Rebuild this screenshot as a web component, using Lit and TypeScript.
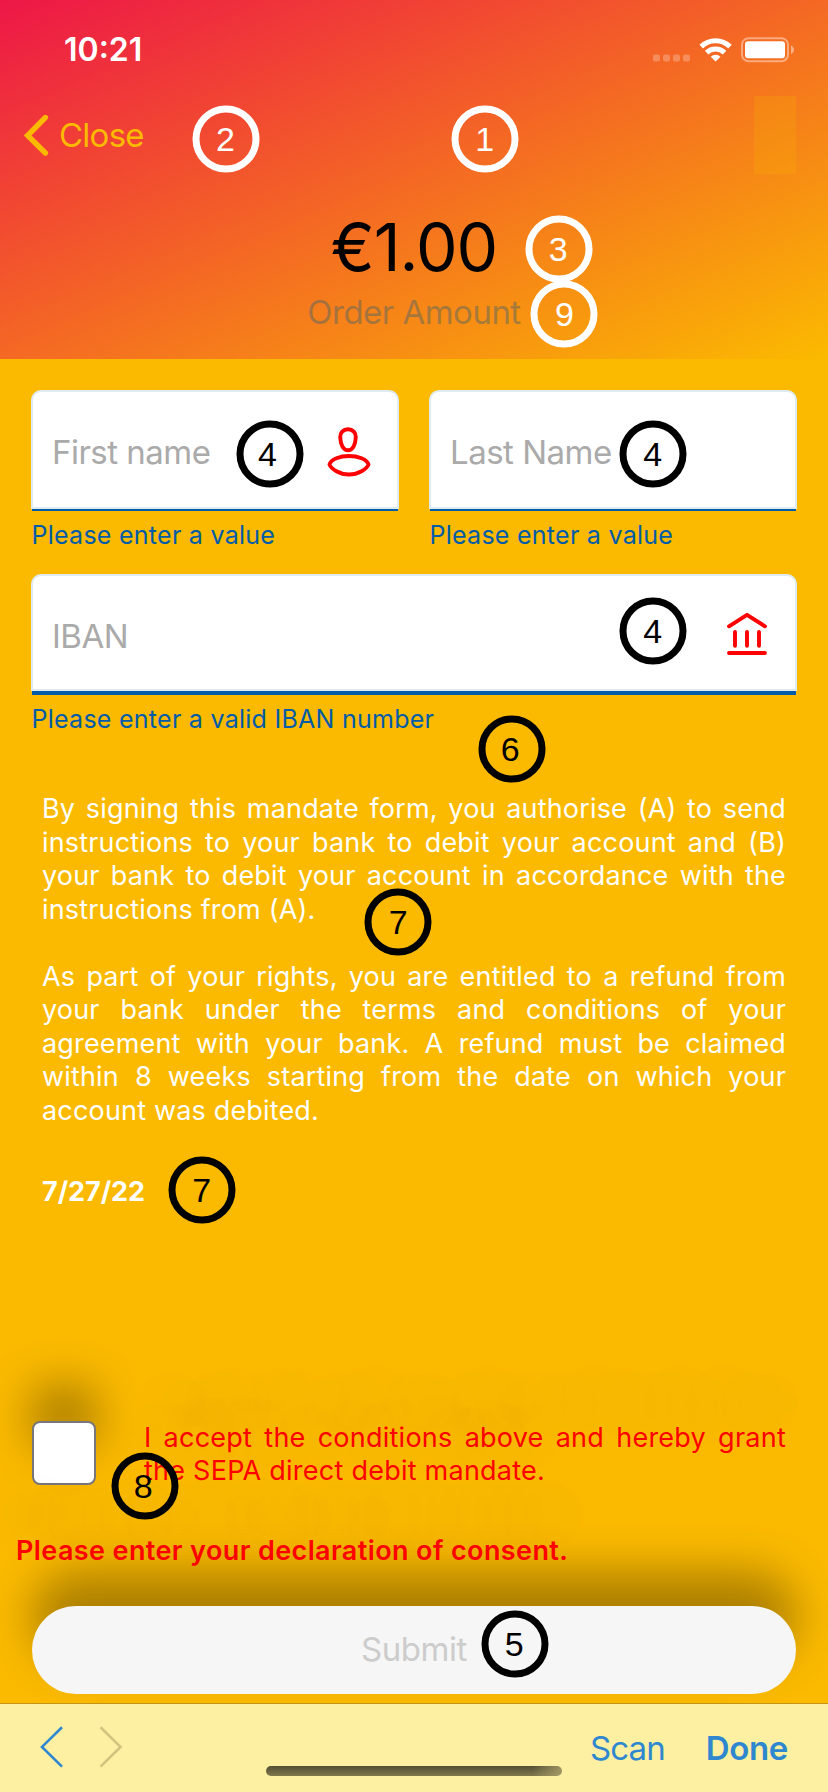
import { LitElement, html, css, svg, nothing, TemplateResult } from "lit";
import { customElement, property } from "lit/decorators.js";
import { classMap } from "lit/directives/class-map.js";

interface Marker {
  label: string;
  x: number;
  y: number;
  shift?: number;
  light?: boolean;
}

const MARKERS: Marker[] = [
  { label: "2", x: 225.5, y: 139.3, light: true },
  { label: "1", x: 484.7, y: 139.3, light: true },
  { label: "3", x: 559.3, y: 249.3, shift: -1, light: true },
  { label: "9", x: 563.5, y: 313.7, shift: 1, light: true },
  { label: "4", x: 269.5, y: 454.3, shift: -2 },
  { label: "4", x: 652.7, y: 454.3 },
  { label: "4", x: 652.7, y: 631 },
  { label: "6", x: 512.3, y: 749, shift: -2 },
  { label: "7", x: 398.3, y: 922.3 },
  { label: "7", x: 201.7, y: 1189.7 },
  { label: "8", x: 145.3, y: 1486, shift: -2 },
  { label: "5", x: 515.3, y: 1644, shift: -1 },
];

const personIcon = svg`
  <path d="M21 2.3C26 2.3 29 5.6 28.8 10.2C28.5 17 26 23.3 21 23.3C16 23.3 13.5 17 13.2 10.2C13 5.6 16 2.3 21 2.3Z"/>
  <path d="M2.5 37.5C4 32.3 13 29 22 29C31 29 40 32.3 41.5 37.5C40 42 31 47.5 22 47.5C13 47.5 4 42 2.5 37.5Z"/>`;

const bankIcon = svg`
  <path d="M4 15.3L22 3.8L40 15.3M10 21V34.7M22 21V34.7M34 21V34.7M4 42H40"/>`;

@customElement("form-field")
class FormField extends LitElement {
  @property() placeholder = "";
  @property() hint = "";
  @property({ type: Boolean }) focused = false;
  @property({ attribute: false }) icon?: TemplateResult;

  static styles = css`
    :host { display: block; }
    .box {
      box-sizing: border-box;
      display: flex;
      align-items: center;
      justify-content: space-between;
      height: 119px;
      padding: 4px 26px 0 19px;
      border: 2px solid #deebf1;
      border-radius: 10px 10px 0 0;
      background: #fff;
    }
    .box.focused { height: 117px; padding-top: 6px; }
    .placeholder {
      font-size: 33px;
      line-height: 40px;
      letter-spacing: -0.51px;
      color: #aaa;
    }
    .line { height: 2px; margin: 0 1px; background: #005ca9; }
    .line.focused { height: 4px; }
    .hint {
      margin: 9px 0 0 0.5px;
      font-size: 25px;
      line-height: 30px;
      letter-spacing: 0.26px;
      color: #005ca9;
      white-space: nowrap;
    }
    svg {
      display: block;
      margin-top: 2px;
      fill: none;
      stroke: #f00;
      stroke-width: 3.9;
      stroke-linecap: round;
      stroke-linejoin: round;
    }
  `;

  render() {
    const state = { focused: this.focused };
    return html`
      <div class=${classMap({ box: true, ...state })}>
        <span class="placeholder">${this.placeholder}</span>
        ${this.icon ? html`<svg width="44" height="52" viewBox="0 0 44 52">${this.icon}</svg>` : nothing}
      </div>
      <div class=${classMap({ line: true, ...state })}></div>
      <div class="hint">${this.hint}</div>
    `;
  }
}

@customElement("app-root")
class AppRoot extends LitElement {
  static styles = css`
    :host {
      display: block;
      position: relative;
      width: 828px;
      height: 1792px;
      overflow: hidden;
      background: #fbba00;
      font-family: Inter, "Open Sans", sans-serif;
    }
    p { margin: 0; }
    svg { display: block; }
    .header {
      height: 359px;
      background: linear-gradient(to bottom right, #ed1747, #fbba00);
    }
    .status {
      box-sizing: border-box;
      display: flex;
      align-items: center;
      height: 96px;
      padding: 3px 34px 0 64px;
      color: #fff;
    }
    .time { flex: 1; font-size: 32px; font-weight: 600; line-height: 40px; }
    .nav {
      display: flex;
      align-items: center;
      height: 78px;
      padding: 0 32px 0 22px;
    }
    .close {
      flex: 1;
      padding-left: 9px;
      font-size: 33px;
      line-height: 40px;
      letter-spacing: -0.75px;
      color: #fbba00;
    }
    .slot { width: 42px; height: 78px; background: rgba(251, 186, 0, 0.2); }
    .order {
      display: flex;
      flex-direction: column;
      align-items: center;
      padding-top: 41px;
    }
    .amount {
      font-size: 66px;
      font-weight: 400;
      line-height: 64px;
      letter-spacing: -1.03px;
      color: #000;
    }
    .caption {
      margin-top: 13px;
      font-size: 33px;
      line-height: 40px;
      letter-spacing: -0.52px;
      color: rgba(85, 102, 97, 0.5);
    }
    .fields {
      display: grid;
      grid-template-columns: 368px 368px;
      column-gap: 30px;
      row-gap: 24px;
      padding: 31px 31px 0;
    }
    .wide { grid-column: 1 / 3; }
    .terms {
      padding: 58px 42px 0;
      font-size: 27px;
      line-height: 33.5px;
      letter-spacing: 0.17px;
      color: #fff;
    }
    .terms p { text-align: justify; }
    .terms p + p { margin-top: 33.5px; }
    .terms .date {
      margin-top: 48px;
      font-weight: 700;
      letter-spacing: -0.05px;
    }
    .consent {
      display: flex;
      align-items: flex-start;
      gap: 48px;
      padding: 212.4px 42px 0 32px;
    }
    .check {
      flex: none;
      box-sizing: border-box;
      width: 64px;
      height: 64px;
      border: 2px solid #77777c;
      border-radius: 8px;
      background: #fff;
      box-shadow: 0 -36px 46px rgba(0, 0, 0, 0.32);
    }
    .grant {
      flex: 1;
      font-size: 27px;
      line-height: 33.5px;
      letter-spacing: 0.24px;
      text-align: justify;
      color: #f00;
      text-shadow: 0 -36px 60px rgba(0, 0, 0, 0.32);
    }
    .error {
      margin: 46px 0 0 16px;
      font-size: 27px;
      font-weight: 600;
      line-height: 34px;
      letter-spacing: 0.39px;
      color: #f00;
      text-shadow: 0 -36px 60px rgba(0, 0, 0, 0.32);
    }
    .submit {
      box-sizing: border-box;
      display: flex;
      justify-content: center;
      align-items: center;
      height: 88px;
      margin: 38px 32px 0;
      padding-bottom: 2px;
      border-radius: 44px;
      background: #f6f6f6;
      box-shadow: 0 -34px 46px rgba(0, 0, 0, 0.32);
      font-size: 33px;
      letter-spacing: -0.46px;
      color: #ccc;
    }
    .toolbar {
      position: relative;
      box-sizing: border-box;
      display: flex;
      align-items: center;
      height: 89px;
      margin-top: 9px;
      padding: 0 40px;
      border-top: 1px solid #c49512;
      background: #fdf0a2;
      font-size: 33px;
      color: #2e87cf;
    }
    .arrows { flex: 1; }
    .scan { letter-spacing: -0.86px; }
    .done { margin-left: 41px; font-weight: 600; letter-spacing: -0.37px; }
    .home {
      position: absolute;
      left: 266px;
      bottom: 16px;
      width: 296px;
      height: 10px;
      border-radius: 5px;
      background:
        linear-gradient(to right, transparent 90%, rgba(175, 163, 110, 0.8)),
        linear-gradient(#524e34, #7f774c);
    }
    .marker {
      position: absolute;
      box-sizing: border-box;
      display: flex;
      align-items: center;
      justify-content: center;
      width: 67px;
      height: 67px;
      padding-bottom: 1px;
      border: 7px solid #000;
      border-radius: 50%;
      transform: translate(-50%, -50%);
      font: 34px/34px "Liberation Sans", sans-serif;
      color: #000;
    }
    .marker.light { border-color: #fff; color: #fff; }
  `;

  render() {
    return html`
      <div class="header">
        <div class="status">
          <span class="time">10:21</span>
          <svg width="142" height="28" viewBox="0 0 142 28">
            <g fill="#fff" fill-opacity=".25">
              <rect x="1" y="18.5" width="7" height="7" rx="2"/>
              <rect x="11" y="18.5" width="7" height="7" rx="2"/>
              <rect x="21" y="18.5" width="7" height="7" rx="2"/>
              <rect x="31" y="18.5" width="7" height="7" rx="2"/>
            </g>
            <g fill="none" stroke="#fff">
              <path stroke-width="5" d="M49.2 10.6A20.7 20.7 0 0 1 78 10.6"/>
              <path stroke-width="5" d="M54.6 16.6A13 13 0 0 1 72.6 16.6"/>
            </g>
            <path fill="#fff" d="M63.6 25.6L58.7 20.7A7.4 7.4 0 0 1 68.5 20.7Z"/>
            <rect x="90" y="2.2" width="46" height="23" rx="6.5" fill="none" stroke="#fff" stroke-opacity=".42" stroke-width="2"/>
            <rect x="93" y="5.2" width="40" height="17" rx="3" fill="#fff"/>
            <path fill="#fff" fill-opacity=".45" d="M139 9.4C143 11.1 143 16.4 139 18Z"/>
          </svg>
        </div>
        <div class="nav">
          <svg width="28" height="44" viewBox="0 0 28 44">
            <path d="M23.4 4.5L5.6 22.5L23.4 40" fill="none" stroke="#fbba00" stroke-width="5.4" stroke-linecap="round"/>
          </svg>
          <span class="close">Close</span>
          <div class="slot"></div>
        </div>
        <div class="order">
          <div class="amount">€1.00</div>
          <div class="caption">Order Amount</div>
        </div>
      </div>

      <div class="fields">
        <form-field placeholder="First name" hint="Please enter a value" .icon=${personIcon}></form-field>
        <form-field placeholder="Last Name" hint="Please enter a value"></form-field>
        <form-field class="wide" focused placeholder="IBAN" hint="Please enter a valid IBAN number" .icon=${bankIcon}></form-field>
      </div>

      <div class="terms">
        <p>By signing this mandate form, you authorise (A) to send instructions to your bank to debit your account and (B) your bank to debit your account in accordance with the instructions from (A).</p>
        <p>As part of your rights, you are entitled to a refund from your bank under the terms and conditions of your agreement with your bank. A refund must be claimed within 8 weeks starting from the date on which your account was debited.</p>
        <div class="date">7/27/22</div>
      </div>

      <div class="consent">
        <div class="check"></div>
        <p class="grant">I accept the conditions above and hereby grant the SEPA direct debit mandate.</p>
      </div>
      <div class="error">Please enter your declaration of consent.</div>
      <div class="submit">Submit</div>

      <div class="toolbar">
        <svg class="arrows" height="44" viewBox="0 0 84 44" preserveAspectRatio="xMinYMid meet">
          <g fill="none" stroke-width="2.6">
            <path d="M22 1.2L2 20.9L22 40.6" stroke="#2e87cf"/>
            <path d="M60.5 1.2L80.5 20.9L60.5 40.6" stroke="#d2c480"/>
          </g>
        </svg>
        <span class="scan">Scan</span>
        <span class="done">Done</span>
        <div class="home"></div>
      </div>

      ${MARKERS.map((m) => html`
        <div class=${classMap({ marker: true, light: !!m.light })}
          style="left:${m.x}px;top:${m.y}px;text-indent:${(m.shift ?? 0) * 2}px">${m.label}</div>`)}
    `;
  }
}
